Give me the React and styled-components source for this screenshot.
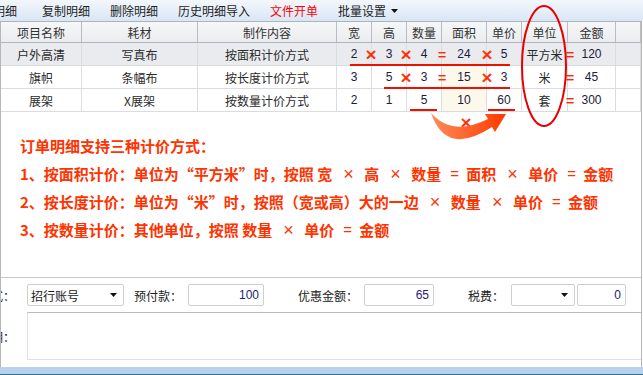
import React from "react";
import styled, { createGlobalStyle } from "styled-components";

const GlobalStyle = createGlobalStyle`
  html, body { margin: 0; padding: 0; background: #fff; }
  body { font-family: "Noto Sans CJK SC", "Liberation Sans", sans-serif; }
  * { box-sizing: border-box; }
`;

const Page = styled.div`
  position: relative;
  width: 643px;
  height: 375px;
  overflow: hidden;
  display: flex;
  flex-direction: column;
  background: #fff;
`;

const Toolbar = styled.div`
  height: 21px;
  flex: none;
  display: flex;
  align-items: center;
  gap: 20px;
  background: linear-gradient(#f3f7fc, #d9e6f5);
  font-size: 12px;
  color: #1e1e1e;
  white-space: nowrap;
`;

const ClipBox = styled.div`
  width: ${(p) => p.$w}px;
  margin-right: ${(p) => p.$mr || 0}px;
  flex: none;
  display: flex;
  justify-content: flex-end;
  overflow: hidden;
  white-space: nowrap;
`;

const ToolItem = styled.span`
  color: ${(p) => (p.$accent ? "#ff0000" : "#1e1e1e")};
  display: inline-flex;
  align-items: center;
  gap: 5px;
`;

const Frame = styled.div`
  flex: 1;
  width: 642px;
  display: flex;
  flex-direction: column;
  border-left: 1px solid #b4b8bd;
  border-right: 1px solid #b4b8bd;
`;

const cols = "81px 116px 139px 35px 35px 35px 45px 35px 46px 48px 1fr";

const HeadRow = styled.div`
  display: grid;
  grid-template-columns: ${cols};
  height: 22px;
  border-top: 1px solid #aab4be;
  border-bottom: 1px solid #b0b6bd;
  background: linear-gradient(#f6f7f9, #eaecef);
`;

const HeadCell = styled.div`
  display: flex;
  align-items: center;
  justify-content: center;
  font-size: 12px;
  color: #333;
  border-right: 1px solid #b9bdc3;
`;

const Row = styled.div`
  display: grid;
  grid-template-columns: ${cols};
  height: 23px;
  border-bottom: 1px solid #dadcdf;
  background: ${(p) => (p.$selected ? "#e9ebee" : "#fff")};
`;

const Cell = styled.div`
  display: flex;
  align-items: center;
  justify-content: center;
  font-size: 12px;
  border-right: 1px solid #dadcdf;
  background: ${(p) => (p.$hl ? "#fdf8ec" : "transparent")};
  font-family: ${(p) =>
    p.$num ? '"Liberation Sans", Arial, sans-serif' : '"Noto Sans CJK SC", sans-serif'};
  color: ${(p) => (p.$num ? "#1c1c3c" : "#2a2a2a")};
`;

const Notes = styled.div`
  flex: 1;
  padding: 20px 0 0 19px;
  color: #ff3300;
  font-size: 15px;
  font-weight: 700;
  line-height: 28px;
  white-space: nowrap;
`;

const NoteLine = styled.div``;

const Op = styled.span`
  display: inline-block;
  width: ${(p) => (p.$eq ? 7 : 10)}px;
  margin: 0 ${(p) => (p.$eq ? 9 : 11)}px;
  text-align: center;
  font-weight: 400;
  font-size: ${(p) => (p.$eq ? 15 : 18)}px;
  line-height: 28px;
  vertical-align: top;
  font-family: "Liberation Sans", Arial, sans-serif;
`;

const FormRow = styled.div`
  height: 35px;
  display: flex;
  align-items: center;
  border-top: 1px solid #c4c6c9;
  font-size: 12px;
  color: #222;
`;

const FieldLabel = styled.div`
  width: ${(p) => p.$w}px;
  margin-left: ${(p) => p.$ml || 0}px;
  flex: none;
  white-space: nowrap;
`;

const Box = styled.div`
  width: ${(p) => p.$w}px;
  margin-left: ${(p) => p.$ml || 0}px;
  height: 22px;
  flex: none;
  display: flex;
  align-items: center;
  justify-content: ${(p) => (p.$select ? "space-between" : "flex-end")};
  padding: 0 ${(p) => (p.$select ? 6 : 4)}px 0 3px;
  border: 1px solid #cbd0d6;
  border-radius: 2px;
  background: #fff;
  font-family: ${(p) =>
    p.$select ? '"Noto Sans CJK SC", sans-serif' : '"Liberation Sans", Arial, sans-serif'};
  font-size: 12px;
  color: ${(p) => (p.$select ? "#222" : "#1e1e70")};
`;

const MemoRow = styled.div`
  height: 48px;
  display: flex;
  align-items: center;
  font-size: 12px;
  color: #222;
  margin-bottom: 7px;
`;

const Memo = styled.div`
  flex: 1;
  height: 48px;
  margin-left: 12px;
  border-top: 1px solid #b9bbbe;
  border-left: 1px solid #dde1e6;
  border-bottom: 1px solid #dde1e6;
`;

const StatusBar = styled.div`
  height: 8px;
  flex: none;
  background: #b9d1ea;
  border-bottom: 1px solid #2a7390;
`;

const Overlay = styled.svg`
  position: absolute;
  left: 0;
  top: 0;
  pointer-events: none;
`;

const Caret = () => (
  <svg width="7" height="4" viewBox="0 0 7 4">
    <path d="M0 0h7L3.5 4z" fill="#111" />
  </svg>
);

const heads = ["项目名称", "耗材", "制作内容", "宽", "高", "数量", "面积", "单价", "单位", "金额", ""];

const rows = [
  { sel: true, v: ["户外高清", "写真布", "按面积计价方式", "2", "3", "4", "24", "5", "平方米", "120", ""] },
  { sel: false, v: ["旗帜", "条幅布", "按长度计价方式", "3", "5", "3", "15", "3", "米", "45", ""] },
  { sel: false, v: ["展架", "X展架", "按数量计价方式", "2", "1", "5", "10", "60", "套", "300", ""] },
];

const numCols = new Set([3, 4, 5, 6, 7, 9]);

const marks = [
  { t: "×", x: 371, y: 54.5 },
  { t: "×", x: 406, y: 54.5 },
  { t: "=", x: 442, y: 54.5 },
  { t: "×", x: 487, y: 54.5 },
  { t: "=", x: 570, y: 54.5 },
  { t: "×", x: 406, y: 77.5 },
  { t: "=", x: 442, y: 77.5 },
  { t: "×", x: 487, y: 77.5 },
  { t: "=", x: 570, y: 77.5 },
  { t: "=", x: 570, y: 100.5 },
  { t: "×", x: 466, y: 123 },
];

const lines = [
  [350, 510, 65],
  [384, 510, 88],
  [410, 437, 110],
  [488, 515, 110],
];

export default function App() {
  return (
    <>
      <GlobalStyle />
      <Page>
        <Toolbar>
          <ClipBox $w={17} $mr={5}>
            <ToolItem>添加明细</ToolItem>
          </ClipBox>
          <ToolItem>复制明细</ToolItem>
          <ToolItem>删除明细</ToolItem>
          <ToolItem>历史明细导入</ToolItem>
          <ToolItem $accent>文件开单</ToolItem>
          <ToolItem>
            批量设置 <Caret />
          </ToolItem>
        </Toolbar>
        <Frame>
          <HeadRow>
            {heads.map((h, i) => (
              <HeadCell key={i}>{h}</HeadCell>
            ))}
          </HeadRow>
          {rows.map((r, ri) => (
            <Row key={ri} $selected={r.sel}>
              {r.v.map((v, i) => (
                <Cell key={i} $num={numCols.has(i)} $hl={!r.sel && i === 6}>
                  {v}
                </Cell>
              ))}
            </Row>
          ))}
          <Notes>
            <NoteLine>订单明细支持三种计价方式：</NoteLine>
            <NoteLine>
              1、按面积计价：单位为“平方米”时，按照 宽<Op>×</Op>高<Op>×</Op>数量<Op $eq>=</Op>面积
              <Op>×</Op>单价<Op $eq>=</Op>金额
            </NoteLine>
            <NoteLine>
              2、按长度计价：单位为“米”时，按照（宽或高）大的一边<Op>×</Op>数量<Op>×</Op>单价
              <Op $eq>=</Op>金额
            </NoteLine>
            <NoteLine>
              3、按数量计价：其他单位，按照 数量<Op>×</Op>单价<Op $eq>=</Op>金额
            </NoteLine>
          </Notes>
          <FormRow>
            <ClipBox $w={14}>付款方式：</ClipBox>
            <Box $select $w={97} $ml={12}>
              招行账号 <Caret />
            </Box>
            <FieldLabel $w={54} $ml={10}>预付款：</FieldLabel>
            <Box $w={76}>100</Box>
            <FieldLabel $w={66} $ml={34}>优惠金额：</FieldLabel>
            <Box $w={70}>65</Box>
            <FieldLabel $w={43} $ml={34}>税费：</FieldLabel>
            <Box $select $w={64}>
              <span />
              <Caret />
            </Box>
            <Box $w={49} $ml={2}>0</Box>
          </FormRow>
          <MemoRow>
            <ClipBox $w={14}>说明：</ClipBox>
            <Memo />
          </MemoRow>
        </Frame>
        <StatusBar />
        <Overlay width="643" height="150" viewBox="0 0 643 150">
          <defs>
            <linearGradient id="arrowGrad" x1="431" y1="0" x2="505" y2="0" gradientUnits="userSpaceOnUse">
              <stop offset="0" stopColor="#ff8c5a" />
              <stop offset="1" stopColor="#ff3a00" />
            </linearGradient>
          </defs>
          {lines.map(([x1, x2, y], i) => (
            <line key={i} x1={x1} x2={x2} y1={y} y2={y} stroke="#ee1100" strokeWidth="2" />
          ))}
          {marks.map((m, i) => (
            <text
              key={i}
              x={m.x}
              y={m.t === "×" ? m.y + 6 : m.y + 5}
              textAnchor="middle"
              fontSize={m.t === "×" ? 19 : 14}
              fontFamily="Liberation Sans, Arial, sans-serif"
              fill="#ff2a00"
              stroke="#ff2a00"
              strokeWidth={m.t === "×" ? 0.6 : 0.3}
            >
              {m.t}
            </text>
          ))}
          <ellipse cx="544" cy="66" rx="22" ry="60" fill="none" stroke="#e80000" strokeWidth="2" />
          <path
            d="M431,113 Q446,157 492,127 L495,132 L506,114 L485,114 L488,119 Q452,137 431,113 Z"
            fill="url(#arrowGrad)"
          />
        </Overlay>
      </Page>
    </>
  );
}
